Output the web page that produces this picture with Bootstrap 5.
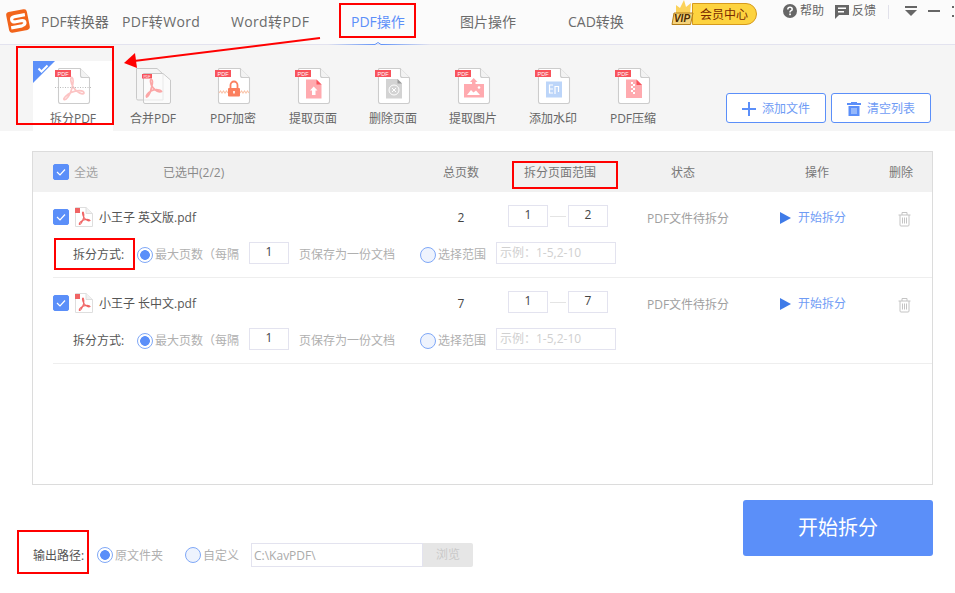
<!DOCTYPE html>
<html lang="zh-CN">
<head>
<meta charset="utf-8">
<title>PDF转换器</title>
<link rel="stylesheet" href="https://cdn.jsdelivr.net/npm/bootstrap@5.3.0/dist/css/bootstrap.min.css">
<style>
html,body{height:593px;overflow:hidden}
body{width:955px;position:relative;background:#fff;font-family:"Open Sans","Noto Sans CJK SC","Liberation Sans",sans-serif;font-size:12px;color:#666;line-height:18px}
.app-head{height:45px;background:#fbfbfb;border-bottom:1px solid #e3e3ef;position:relative}
.app-logo{position:absolute;left:5px;top:8px;width:26px;height:26px}
.tab-link{position:absolute;top:13px;font-size:14px;line-height:18px;color:#6b6b6b;white-space:nowrap}
.tab-link.on{color:#5b8ff9}
.tab-link.wide{letter-spacing:.35px}
.tab-under{position:absolute;left:328px;top:42px}
.vip-pill{position:absolute;left:692px;top:3px;width:65px;height:22px;border-radius:0 11px 11px 0;background:#fdd33f;border:1px solid #d69a1c;color:#7a2a00;line-height:22px;padding-left:7px;font-size:12px}
.vip-crown{position:absolute;left:671px;top:0}
.top-act{position:absolute;top:2px;display:flex;align-items:center;gap:3px;color:#666;font-size:12px;white-space:nowrap}
.top-div{position:absolute;left:888px;top:5px;width:1px;height:14px;background:#e1e1ea}
.tool-bar{height:86px;background:#f5f5f5;padding-left:33px;position:relative}
.tool-it{width:80px;height:86px;padding-top:23px;text-align:center;position:relative;color:#666;flex:none}
.tool-it svg{display:block;margin:0 auto 6px;width:36px;height:36px}
.tool-it.on{background:linear-gradient(#f5f5f5 16px,#fff 16px)}
.on-corner{position:absolute;left:0;top:16px;width:0;height:0;border-top:22px solid #5b8ff9;border-right:22px solid transparent}
.tool-it svg.on-check{position:absolute;left:4px;top:19px;margin:0;width:12px;height:9px}
.act-btns{position:absolute;left:726px;top:48px;display:flex;gap:5px}
.act-btn{width:100px;height:30px;padding:1px 0 0;display:flex;align-items:center;justify-content:center;gap:6px;font-size:12px;line-height:18px;color:#6f9cf5;background:#fff;border:1px solid #5b8ff9;border-radius:3px}
.list-panel{margin:20px 22px 0 32px;height:334px;border:1px solid #dcdcdc}
.list-head{height:40px;background:#f1f1f1;padding-left:20px;display:flex;align-items:center;color:#777;position:relative}
.list-head span{position:absolute;top:12px;white-space:nowrap}
.list-head span.dim{color:#a3a3a3}
.list-head span.mid{color:#8a8a8a}
.form-check-input.tick{width:16px;height:16px;margin:0;border-radius:2px;background-color:#5b8ff9;border-color:#5b8ff9;flex:none;background-size:16px;background-image:url("data:image/svg+xml,%3csvg xmlns='http://www.w3.org/2000/svg' viewBox='0 0 16 16'%3e%3cpath fill='none' stroke='%23fff' stroke-width='1.2' d='M4 8l3 3 5-5.500'/%3e%3c/svg%3e")}
.form-check-input.pick{width:16px;height:16px;margin:0;flex:none;background-color:#eef3fd;border-color:#7fa8f7;background-image:none;position:relative;top:2px}
.form-check-input.pick:checked{background-color:#fff;background-image:radial-gradient(circle,#5b8ff9 0 4.5px,#fff 5.2px)}
.file-row{margin-left:20px;height:86px;border-bottom:1px solid #eee;color:#999}
.row-one{height:50px;padding-top:13px;display:flex;align-items:flex-start}
.row-two{height:22px;display:flex;align-items:center}
.c-name{width:373px;display:flex;align-items:center;gap:5px;height:24px;color:#555;font-size:12px}
.c-name svg{flex:none}
.c-name span{margin-top:2px}
.c-total{width:70px;text-align:center;line-height:26px;color:#444}
.c-range{margin-left:12px;width:100px;display:flex;align-items:center}
.dash{width:16px;height:1px;background:#e4e4e4;margin:0 2px}
.c-state{margin-left:39px;width:133px;line-height:28px;color:#a0a0a0}
.c-action{width:118px;height:26px;line-height:28px;color:#6f9cf5;display:flex;align-items:center;gap:7px}
.bin-ico{margin-top:7px}
.form-control.num{width:40px;height:22px;padding:0 0 3px;border-radius:0;border:1px solid #e3e3ef;text-align:center;font-size:12px;color:#444;line-height:17px;background:#fff;flex:none;box-shadow:none}
.form-control.eg{width:120px;height:22px;padding:0 3px 2px;border-radius:0;border:1px solid #e3e3ef;font-size:12px;line-height:18px;flex:none}
.form-control.eg::placeholder{color:#d0d0d0}
.way-label{width:84px;padding-left:20px;color:#555;flex:none;white-space:nowrap;position:relative;top:2px}
.lite{color:#b0b0b0;white-space:nowrap;position:relative;top:2px}
.bottom-zone{height:67px;margin:15px 22px 0 33px;display:flex;justify-content:space-between}
.out-line{align-self:flex-end;display:flex;align-items:center;height:24px}
.out-line .form-check-input.pick{top:0}
.out-line .lite{top:1px}
.out-tag{width:64px;color:#555;position:relative;top:1px}
.path-box{width:172px;height:24px;padding:0 2px;border-radius:0;border:1px solid #e3e3ef;font-size:12px;color:#aaa;background:#fff;box-shadow:none}
.path-btn{width:50px;height:24px;background:#e6e6e6;color:#c9c9c9;border:0;border-radius:0 2px 2px 0;padding:0;font-size:12px;line-height:24px}
.go-btn{width:190px;height:56px;background:#5b8ff9;border:0;color:#fff;font-size:20px;border-radius:3px;padding:0}
.mark-box{position:absolute;border:2px solid #f00;pointer-events:none}
.mark-arrow{position:absolute;left:120px;top:34px;pointer-events:none}
</style>
</head>
<body>
<svg width="0" height="0" class="position-absolute">
  <defs>
    <g id="doc-base">
      <path d="M3.500 1.500a1 1 0 0 1 1-1H25L34.500 10V33.500a2 2 0 0 1-2 2H5.500a2 2 0 0 1-2-2z" fill="#fff" stroke="#cccccc" stroke-width="1.100"/>
      <path d="M25.500 .5V7.500a2 2 0 0 0 2 2H34.500" fill="#f3f3f3" stroke="#cccccc" stroke-width="1.100"/>
      <rect x="0" y="2" width="16" height="7" fill="#f8535c"/>
      <text x="8" y="7.500" font-size="5.500" fill="#fff" text-anchor="middle" font-family="Liberation Sans">PDF</text>
    </g>
    <path id="acro" d="M17 9.500C15 9 15.500 15 18.500 19.500C21.500 24.500 28 27 29 25C28.500 22 22 22 16 24.500C12 26.500 8 30.500 9 31.500C11 32.500 15.500 27 17 20C18 16 18.500 10.500 17 9.500z" fill="none" stroke="#fcc4c4" stroke-width="1.700"/>
    <g id="mini-pdf">
      <path d="M1.500 .5H12L18.500 6.500V19.500H1.500z" fill="#fff" stroke="#dedede"/>
      <path d="M12 .5V6.500H18.500" fill="#f1f1f1" stroke="#dedede"/>
      <rect x="1" y="1" width="5" height="5" fill="#f06464"/>
      <path d="M9 5C8 5 8.500 8 10 10.500C11.500 13 14.500 14.500 16 13.500C15.500 12 11.500 12 8.500 13.500C6.500 14.500 4.500 17 5.500 17.500C6.500 18 8.500 14.500 9.500 11C10 9 10 5.500 9 5z" fill="none" stroke="#f06464" stroke-width="1.100"/>
    </g>
    <g id="bin">
      <path d="M.5 3H12.500M4 3V.5H9V3M2 3V13a1 1 0 0 0 1 1H10a1 1 0 0 0 1-1V3M4.500 5.500V11.500M6.500 5.500V11.500M8.500 5.500V11.500" fill="none" stroke="#c4c4c4"/>
    </g>
  </defs>
</svg>

<header class="app-head d-flex">
  <svg class="app-logo" viewBox="0 0 26 26"><g transform="rotate(-11 13 13)"><rect x="2.500" y="2.500" width="21" height="21" rx="3" fill="#f2641b"/><path d="M21 8H10.500Q7 8 7 10.700T10.500 13.300H16Q19.500 13.300 19.500 15.700T16 18.500H5" fill="none" stroke="#fff" stroke-width="3.200"/></g></svg>
  <a class="tab-link text-decoration-none" style="left:41px">PDF转换器</a>
  <a class="tab-link wide text-decoration-none" style="left:122px">PDF转Word</a>
  <a class="tab-link wide text-decoration-none" style="left:231px">Word转PDF</a>
  <a class="tab-link text-decoration-none on" style="left:351px">PDF操作</a>
  <a class="tab-link text-decoration-none" style="left:460px">图片操作</a>
  <a class="tab-link text-decoration-none" style="left:568px">CAD转换</a>
  <svg class="tab-under" width="102" height="4" viewBox="0 0 102 4"><defs><linearGradient id="ug"><stop offset="0" stop-color="#5b8ff9" stop-opacity="0"/><stop offset=".5" stop-color="#5b8ff9"/><stop offset="1" stop-color="#5b8ff9" stop-opacity="0"/></linearGradient></defs><path d="M0 2.500H47L50 .5L53 2.500H102" fill="none" stroke="url(#ug)"/></svg>
  <div class="vip-pill">会员中心</div>
  <svg class="vip-crown" width="24" height="26" viewBox="0 0 24 26"><path d="M5 14L5 5L9 8L13 0L15 7L20 3L19 14z" fill="#fbd25a"/><path d="M3 13H22L19.500 24.500H1z" fill="#f4d27a" stroke="#b27c17"/><text x="11" y="22" font-size="10" font-weight="700" font-style="italic" text-anchor="middle" fill="#4a2a00" font-family="Liberation Sans">VIP</text></svg>
  <div class="top-act" style="left:783px"><svg width="14" height="14" viewBox="0 0 14 14"><circle cx="7" cy="7" r="7" fill="#666"/><path d="M4.800 5.500Q4.800 3.300 7 3.300T9.200 5.200Q9.200 6.300 7.800 6.900Q7 7.300 7 8.500" fill="none" stroke="#fff" stroke-width="1.500"/><rect x="6.200" y="9.500" width="1.700" height="1.700" fill="#fff"/></svg>帮助</div>
  <div class="top-act" style="left:835px"><svg width="14" height="15" viewBox="0 0 14 15"><path d="M0 1H14V11H4L0 15z" fill="#666"/><rect x="3" y="3.500" width="8" height="1.500" fill="#fff"/><rect x="3" y="7" width="6" height="1.500" fill="#fff"/></svg>反馈</div>
  <div class="top-div"></div>
  <svg class="position-absolute" style="left:904px;top:6px" width="14" height="10" viewBox="0 0 14 10"><rect x="1" y="0" width="12" height="2" fill="#666"/><path d="M1 4H13L7 10z" fill="#666"/></svg>
  <svg class="position-absolute" style="left:928px;top:10px" width="12" height="2" viewBox="0 0 12 2"><rect width="12" height="2" fill="#666"/></svg>
  <svg class="position-absolute" style="left:952px;top:6px" width="3" height="11" viewBox="0 0 3 11"><path d="M0 0H2V2H0zM0 9H2V11H0z" fill="#666"/></svg>
</header>

<section class="tool-bar d-flex">
  <div class="tool-it on">
    <i class="on-corner"></i>
    <svg class="on-check" viewBox="0 0 12 9"><path d="M1.500 4.500L4.500 7.500L10.500 1.500" fill="none" stroke="#fff" stroke-width="2"/></svg>
    <svg viewBox="0 0 36 36"><use href="#doc-base"/><use href="#acro"/><path d="M0 19.500H36" stroke="#bbb" stroke-dasharray="1 1.500"/></svg>拆分PDF
  </div>
  <div class="tool-it">
    <svg viewBox="0 0 36 36"><path d="M1.500 .5H22L28 6V32H3a1.500 1.500 0 0 1-1.500-1.500z" fill="#f5f5f5" stroke="#c9c9c9"/><path d="M8.500 5.500H28L35.500 12V34a1.500 1.500 0 0 1-1.500 1.500H10a1.500 1.500 0 0 1-1.500-1.500z" fill="#fff" fill-opacity=".6" stroke="#c9c9c9"/><rect x="7" y="6" width="10" height="4.500" fill="#f8535c"/><text x="12" y="9.800" font-size="3.500" fill="#fff" text-anchor="middle" font-family="Liberation Sans">PDF</text><path d="M16.500 11.500C15 11 15 15 17.500 19C20 23 24.500 24.500 26.500 23.500C26 21.500 20 21 16 23C12.500 25 10.500 28 11.500 29C12.500 29.500 15.500 25 16.500 19.500C17.500 16 18 12 16.500 11.500z" fill="none" stroke="#fba6a6" stroke-width="1.700"/></svg>合并PDF
  </div>
  <div class="tool-it">
    <svg viewBox="0 0 36 36"><use href="#doc-base"/><path d="M4 25L5.500 23L7 25L8.500 23L10 25L11.500 23L13 25M25 25L26.500 23L28 25L29.500 23L31 25L32.500 23L34 25" fill="none" stroke="#fbc6ac" stroke-width="1.100"/><path d="M15.500 20V17a3.500 3.500 0 0 1 7 0V20" fill="none" stroke="#fb7f5e" stroke-width="1.800"/><rect x="13" y="20" width="12" height="8.500" rx="1" fill="#fb7f5e"/><rect x="18.200" y="23" width="1.600" height="2.500" fill="#fff"/></svg>PDF加密
  </div>
  <div class="tool-it">
    <svg viewBox="0 0 36 36"><use href="#doc-base"/><path d="M11 11.500H21.500L26.500 16.500V30.500H11z" fill="#ffaaaf"/><path d="M21.500 11.500L26.500 16.500H21.500z" fill="#f8535c"/><path d="M18.700 18.500L22.500 22.500H20.500V27H17V22.500H15z" fill="#fff"/></svg>提取页面
  </div>
  <div class="tool-it">
    <svg viewBox="0 0 36 36"><use href="#doc-base"/><path d="M11 11H22.500L27 15.500V30.500H11z" fill="#d3d3d3"/><path d="M22.500 11L27 15.500H22.500z" fill="#999"/><circle cx="19" cy="22" r="5" fill="none" stroke="#fff"/><path d="M17 20L21 24M21 20L17 24" stroke="#fff"/></svg>删除页面
  </div>
  <div class="tool-it">
    <svg viewBox="0 0 36 36"><use href="#doc-base"/><rect x="9" y="16" width="20" height="13.500" fill="#ffaaaf"/><path d="M18.700 10L22.500 14H20.500V18H17V14H15z" fill="#ffaaaf"/><path d="M12 27L16 22L18.500 24.500L21 22.500L25 27z" fill="#fff"/><circle cx="24" cy="19.500" r="1.300" fill="#fff"/></svg>提取图片
  </div>
  <div class="tool-it">
    <svg viewBox="0 0 36 36"><use href="#doc-base"/><rect x="11" y="13.500" width="16" height="16" fill="#bcd5f9"/><path d="M18 17H14.500V25H18M14.500 21H18M20 26V18.500H23.500V24" fill="none" stroke="#fff" stroke-width="1.200"/></svg>添加水印
  </div>
  <div class="tool-it">
    <svg viewBox="0 0 36 36"><use href="#doc-base"/><path d="M11 11.500H21.500L27 17V30H11z" fill="#ffaaaf"/><path d="M21.500 11.500L27 17H21.500z" fill="#f8535c"/><path d="M16 14H18V16H16zM18 16H20V18H18zM16 18H18V20H16zM18 20H20V22H18zM16 22H18V24H16zM18 24H20V26H18z" fill="#fff"/></svg>PDF压缩
  </div>
  <div class="act-btns">
    <button type="button" class="btn act-btn"><svg width="14" height="14" viewBox="0 0 14 14"><path d="M7 0V14M0 7H14" stroke="#5b8ff9" stroke-width="2"/></svg>添加文件</button>
    <button type="button" class="btn act-btn"><svg width="14" height="14" viewBox="0 0 14 14"><rect x="0" y="1" width="14" height="2" fill="#5b8ff9"/><rect x="4" y="0" width="6" height="2" fill="#5b8ff9"/><path d="M1.500 4H12.500V14H1.500z" fill="#5b8ff9"/><path d="M5 6V12M7 6V12M9 6V12" stroke="#cfe0fd"/></svg>清空列表</button>
  </div>
</section>

<main class="list-panel">
  <div class="list-head">
    <input class="form-check-input tick" type="checkbox" checked aria-label="全选">
    <span class="dim" style="left:41px">全选</span>
    <span class="mid" style="left:130px">已选中(2/2)</span>
    <span style="left:410px">总页数</span>
    <span style="left:491px">拆分页面范围</span>
    <span style="left:638px">状态</span>
    <span style="left:772px">操作</span>
    <span style="left:856px">删除</span>
  </div>
  <div class="file-row">
    <div class="row-one">
      <div class="c-name"><input class="form-check-input tick" type="checkbox" checked aria-label="选择"><svg width="20" height="20" viewBox="0 0 20 20"><use href="#mini-pdf"/></svg><span>小王子 英文版.pdf</span></div>
      <div class="c-total">2</div>
      <div class="c-range"><input class="form-control num" value="1" aria-label="起始页"><i class="dash"></i><input class="form-control num" value="2" aria-label="结束页"></div>
      <div class="c-state">PDF文件待拆分</div>
      <div class="c-action"><svg width="11" height="12" viewBox="0 0 11 12"><path d="M0 0L11 6L0 12z" fill="#3f7be8"/></svg>开始拆分</div>
      <svg class="bin-ico" width="13" height="15" viewBox="0 0 13 15"><use href="#bin"/></svg>
    </div>
    <div class="row-two">
      <span class="way-label">拆分方式:</span>
      <input class="form-check-input pick" type="radio" name="w1" checked aria-label="最大页数">
      <span class="lite" style="margin-left:2px;width:94px">最大页数（每隔</span>
      <input class="form-control num" value="1" aria-label="页数">
      <span class="lite" style="margin-left:10px;width:121px">页保存为一份文档</span>
      <input class="form-check-input pick" type="radio" name="w1" aria-label="选择范围">
      <span class="lite" style="margin-left:2px;width:58px">选择范围</span>
      <input class="form-control eg" placeholder="示例：1-5,2-10" aria-label="范围">
    </div>
  </div>
  <div class="file-row">
    <div class="row-one">
      <div class="c-name"><input class="form-check-input tick" type="checkbox" checked aria-label="选择"><svg width="20" height="20" viewBox="0 0 20 20"><use href="#mini-pdf"/></svg><span>小王子 长中文.pdf</span></div>
      <div class="c-total">7</div>
      <div class="c-range"><input class="form-control num" value="1" aria-label="起始页"><i class="dash"></i><input class="form-control num" value="7" aria-label="结束页"></div>
      <div class="c-state">PDF文件待拆分</div>
      <div class="c-action"><svg width="11" height="12" viewBox="0 0 11 12"><path d="M0 0L11 6L0 12z" fill="#3f7be8"/></svg>开始拆分</div>
      <svg class="bin-ico" width="13" height="15" viewBox="0 0 13 15"><use href="#bin"/></svg>
    </div>
    <div class="row-two">
      <span class="way-label">拆分方式:</span>
      <input class="form-check-input pick" type="radio" name="w2" checked aria-label="最大页数">
      <span class="lite" style="margin-left:2px;width:94px">最大页数（每隔</span>
      <input class="form-control num" value="1" aria-label="页数">
      <span class="lite" style="margin-left:10px;width:121px">页保存为一份文档</span>
      <input class="form-check-input pick" type="radio" name="w2" aria-label="选择范围">
      <span class="lite" style="margin-left:2px;width:58px">选择范围</span>
      <input class="form-control eg" placeholder="示例：1-5,2-10" aria-label="范围">
    </div>
  </div>
</main>

<section class="bottom-zone">
  <div class="out-line">
    <span class="out-tag">输出路径:</span>
    <input class="form-check-input pick" type="radio" name="o" checked aria-label="原文件夹">
    <span class="lite" style="margin-left:2px;width:70px">原文件夹</span>
    <input class="form-check-input pick" type="radio" name="o" aria-label="自定义">
    <span class="lite" style="margin-left:2px;width:48px">自定义</span>
    <input class="form-control path-box" value="C:\KavPDF\" aria-label="路径">
    <button type="button" class="btn path-btn">浏览</button>
  </div>
  <button type="button" class="btn go-btn">开始拆分</button>
</section>

<svg class="mark-arrow" width="204" height="36" viewBox="0 0 204 36"><path d="M200 4L14 27" stroke="#f00" stroke-width="2"/><path d="M4 29L15 19L17 34z" fill="#f00"/></svg>
<div class="mark-box" style="left:339px;top:3px;width:77px;height:35px"></div>
<div class="mark-box" style="left:16px;top:46px;width:98px;height:79px"></div>
<div class="mark-box" style="left:512px;top:161px;width:106px;height:28px"></div>
<div class="mark-box" style="left:54px;top:238px;width:81px;height:32px"></div>
<div class="mark-box" style="left:17px;top:530px;width:72px;height:44px"></div>
<script src="https://cdn.jsdelivr.net/npm/bootstrap@5.3.0/dist/js/bootstrap.bundle.min.js"></script>
</body>
</html>
